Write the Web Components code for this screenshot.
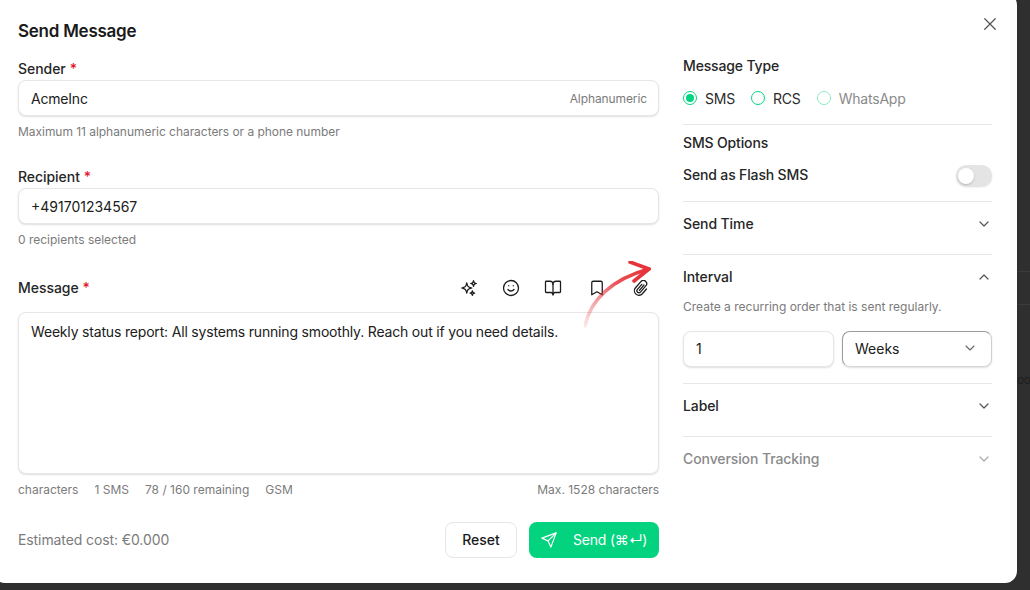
<!DOCTYPE html>
<html>
<head>
<meta charset="utf-8">
<title>Send Message</title>
<style>
  html, body { margin: 0; height: 590px; overflow: hidden; background: #2f2f2f; }
  body { font-family: Inter, "Noto Sans", sans-serif; }
</style>
</head>
<body>
<send-page></send-page>

<script>
const ICONS = {
  sparkles: '<path d="M9.8 15.9 9 18.75l-.8-2.85a4.5 4.5 0 0 0-3.1-3.1L2.25 12l2.85-.8a4.5 4.5 0 0 0 3.1-3.1L9 5.25l.8 2.85a4.5 4.5 0 0 0 3.1 3.1l2.85.8-2.85.8a4.5 4.5 0 0 0-3.1 3.1Z"/><path d="M18.26 8.7 18 9.75l-.26-1.05a3.4 3.4 0 0 0-2.45-2.45L14.25 6l1.04-.26a3.4 3.4 0 0 0 2.45-2.45L18 2.25l.26 1.04a3.4 3.4 0 0 0 2.45 2.45L21.75 6l-1.04.25a3.4 3.4 0 0 0-2.45 2.45Z"/><path d="M16.9 20.57l-.4 1.18-.4-1.18a2.25 2.25 0 0 0-1.42-1.42l-1.18-.4 1.18-.4a2.25 2.25 0 0 0 1.42-1.42l.4-1.18.4 1.18a2.25 2.25 0 0 0 1.42 1.42l1.18.4-1.18.4a2.25 2.25 0 0 0-1.42 1.42Z"/>',
  smile: '<circle cx="12" cy="12" r="10"/><path d="M8 14s1.5 2 4 2 4-2 4-2"/><path d="M9 9h.01M15 9h.01"/>',
  book: '<path d="M12 7v14"/><path d="M3 18a1 1 0 0 1-1-1V4a1 1 0 0 1 1-1h5a4 4 0 0 1 4 4 4 4 0 0 1 4-4h5a1 1 0 0 1 1 1v13a1 1 0 0 1-1 1h-6a3 3 0 0 0-3 3 3 3 0 0 0-3-3z"/>',
  bookmark: '<path d="m19 21-7-4-7 4V5a2 2 0 0 1 2-2h10a2 2 0 0 1 2 2z"/>',
  clip: '<path d="M13.23 6.5l-6.6 7.6a3 3 0 0 0 4.5 4l8.1-9.2a4.9 4.9 0 0 0-7.4-6.5l-8 9.2a6.8 6.8 0 0 0 10.2 9l6.2-7.1"/><path d="M16.5 7.5l-6.9 8"/>',
  send: '<path d="M21.5 2.5 14.5 21.5 10.8 13.2 2.5 9.5z"/><path d="M21.5 2.5 10.8 13.2"/>',
  close: '<path d="M5 5l14 14M19 5 5 19"/>',
  down: '<path d="m6 9 6 6 6-6"/>',
  up: '<path d="m6 15 6-6 6 6"/>'
};

function icon(name, size, width) {
  return `<svg width="${size}" height="${size}" viewBox="0 0 24 24" fill="none" stroke="currentColor" stroke-width="${width || 2}" stroke-linecap="round" stroke-linejoin="round">${ICONS[name]}</svg>`;
}

class FieldLabel extends HTMLElement {
  constructor() {
    super();
    this.attachShadow({ mode: "open" });
    this.shadowRoot.innerHTML = `
      <style>
        :host { display:block; height:20px; line-height:20px; font-size:14px; font-weight:450; letter-spacing:-.05px; color:#262626; }
        b { color:#e5142d; font-weight:500; margin-left:4px; }
      </style>
      <slot></slot><b>*</b>`;
  }
}

class TextBox extends HTMLElement {
  constructor() {
    super();
    this.attachShadow({ mode: "open" });
    this.shadowRoot.innerHTML = `
      <style>
        :host { display:flex; align-items:center; justify-content:space-between; box-sizing:border-box;
                height:36px; padding:0 11px 0 12px; background:#fff; border:1px solid #e6e6e6; border-radius:8px;
                box-shadow:0 1px 2px rgba(0,0,0,.13); font-size:14px; color:#202020; }
        ::slotted([slot=hint]) { font-size:12px; color:#7b7b7b; letter-spacing:-.1px; }
      </style>
      <span><slot></slot></span><slot name="hint"></slot>`;
  }
}

class RadioOption extends HTMLElement {
  constructor() {
    super();
    this.attachShadow({ mode: "open" });
    this.shadowRoot.innerHTML = `
      <style>
        :host { display:flex; align-items:center; gap:8px; height:20px; font-size:14px; letter-spacing:-.2px; color:#2a2a2a; }
        :host([disabled]) { color:#8a8a8a; }
        i { box-sizing:border-box; width:14px; height:14px; border-radius:50%; border:1.5px solid #05d384;
            display:flex; align-items:center; justify-content:center; }
        :host([disabled]) i { border-color:#8ceac3; border-width:1px; }
        :host([checked]) i::after { content:""; width:8px; height:8px; border-radius:50%; background:#05d384; }
      </style>
      <i></i><span><slot></slot></span>`;
  }
}

class ToggleSwitch extends HTMLElement {
  constructor() {
    super();
    this.attachShadow({ mode: "open" });
    this.shadowRoot.innerHTML = `
      <style>
        :host { display:flex; align-items:center; box-sizing:border-box; width:36px; height:21px; padding:0 2px;
                border-radius:11px; background:#e4e4e4; box-shadow:0 1px 2px rgba(0,0,0,.15); }
        i { width:16px; height:16px; border-radius:50%; background:#fff; box-shadow:0 1px 2px rgba(0,0,0,.2); }
      </style>
      <i></i>`;
  }
}

class AccordionRow extends HTMLElement {
  constructor() {
    super();
    this.attachShadow({ mode: "open" });
    const open = this.hasAttribute("open");
    this.shadowRoot.innerHTML = `
      <style>
        :host { display:block; padding-bottom:8px; border-bottom:1px solid #e6e6e6; color:#262626; }
        :host([disabled]) { color:#8a8a8a; border-bottom:none; }
        header { display:flex; align-items:center; justify-content:space-between; height:44px; font-size:14px; font-weight:450; letter-spacing:-.1px; }
        header span { padding-bottom:2px; }
        header svg { display:block; color:#555; }
        :host([disabled]) header svg { color:#aaa; }
      </style>
      <header><span>${this.getAttribute("title")}</span>${icon(open ? "up" : "down", 16, 1.8)}</header>
      <slot></slot>`;
  }
}

class ToolIcon extends HTMLElement {
  constructor() {
    super();
    this.attachShadow({ mode: "open" });
    const size = this.getAttribute("size") || 18;
    this.shadowRoot.innerHTML = `
      <style>
        :host { display:flex; align-items:center; justify-content:center; width:18px; height:18px; color:#1c1c1c; }
        svg { display:block; }
      </style>
      ${icon(this.getAttribute("name"), size, 1.7 * 18 / size)}`;
  }
}

class SendPage extends HTMLElement {
  constructor() {
    super();
    this.attachShadow({ mode: "open" });
    this.shadowRoot.innerHTML = `
      <style>
        :host { display:flex; width:1030px; height:590px; overflow:hidden; }
        .dialog { position:relative; flex:none; box-sizing:border-box; width:1024px; height:590px; margin:-7px 0 0 -7px;
                  padding:7px 0 0 25px; background:#fff; border-radius:12px; display:flex; gap:24px; }
        .left { width:641px; flex:none; }
        .right { width:309px; flex:none; padding-top:56px; }
        h1 { margin:18px 0 15px; font-size:17px; line-height:26px; font-weight:600; color:#1a1a1a; letter-spacing:-.25px; }
        text-box { margin-top:1px; }
        .tight { letter-spacing:-.2px; }
        .help { margin-top:8px; font-size:12px; line-height:16px; color:#7b7b7b; }
        .help.long { letter-spacing:-.04px; }
        .gap { margin-top:27px; }
        .msg-head { display:flex; align-items:center; justify-content:space-between; margin-top:30px; }
        .tools { display:flex; gap:24px; padding-right:9px; }
        .tools .w { margin-left:2px; }
        .area { box-sizing:border-box; height:162px; margin-top:14px; padding:9px 12px; border:1px solid #e6e6e6; border-radius:8px;
                background:#fff; box-shadow:0 1px 2px rgba(0,0,0,.13); font-size:14px; line-height:20px; letter-spacing:-.18px; color:#202020; }
        .counts { display:flex; gap:16px; margin-top:8px; font-size:12px; line-height:16px; color:#7b7b7b; }
        .counts .max { margin-left:auto; }
        .bottom { display:flex; align-items:center; gap:12px; margin-top:24px; }
        .cost { margin-right:auto; padding-bottom:1px; font-size:14px; letter-spacing:-.1px; color:#7b7b7b; }
        .btn { box-sizing:border-box; height:36px; border-radius:8px; font-size:14px; font-weight:450; display:flex; align-items:center; padding-bottom:1px; }
        .reset { width:72px; justify-content:center; border:1px solid #e6e6e6; color:#1a1a1a; background:#fff; }
        .send { width:130px; padding-left:11px; background:#03d37f; color:#fff; gap:15px; }
        .send span { font-weight:400; letter-spacing:-.2px; }
        .send svg { flex:none; }
        .title { height:20px; line-height:20px; font-size:14px; font-weight:450; letter-spacing:-.15px; color:#262626; }
        .radios { display:flex; gap:16px; margin-top:12px; padding-bottom:16px; border-bottom:1px solid #e6e6e6; }
        .sms-title { margin-top:8px; }
        .flash { display:flex; align-items:center; justify-content:space-between; height:21px; margin-top:12px; padding-bottom:15px; border-bottom:1px solid #e6e6e6; font-size:14px; font-weight:450; letter-spacing:-.15px; color:#262626; }
        .flash span { padding-bottom:2px; }
        .sub { font-size:12px; line-height:16px; color:#7b7b7b; }
        .pair { display:flex; gap:8px; margin-top:16px; padding-bottom:8px; }
        .pair text-box { margin:0; flex:none; padding-bottom:2px; }
        .num { width:151px; }
        .sel { width:150px; border-color:#9c9c9c #cfcfcf #d8d8d8 #9c9c9c; }
        .pair .sel { padding-right:13px; }
        .sel svg { display:block; color:#666; }
        .close { position:absolute; right:18px; top:22px; width:18px; height:18px; color:#555; }
        .close svg { display:block; }
        .arrow { position:absolute; left:591px; top:268px; pointer-events:none; }
        .strip { flex:1; padding-top:271px; font-size:12px; letter-spacing:-.5px; color:#1e1e1e; overflow:hidden; }
        .strip hr { height:1px; margin:0 0 32px; border:0; background:#3b3b3b; }
        .strip div { margin-top:65px; line-height:20px; white-space:nowrap; }
      </style>
      <div class="dialog">
        <div class="left">
          <h1>Send Message</h1>
          <field-label>Sender</field-label>
          <text-box><span class="tight">AcmeInc</span><span slot="hint">Alphanumeric</span></text-box>
          <div class="help long">Maximum 11 alphanumeric characters or a phone number</div>
          <field-label class="gap">Recipient</field-label>
          <text-box>+491701234567</text-box>
          <div class="help">0 recipients selected</div>
          <div class="msg-head">
            <field-label>Message</field-label>
            <div class="tools">
              <tool-icon name="sparkles"></tool-icon>
              <tool-icon name="smile"></tool-icon>
              <tool-icon name="book"></tool-icon>
              <tool-icon class="w" name="bookmark"></tool-icon>
              <tool-icon class="w" name="clip" size="16"></tool-icon>
            </div>
          </div>
          <div class="area">Weekly status report: All systems running smoothly. Reach out if you need details.</div>
          <div class="counts">
            <span>characters</span><span>1 SMS</span><span>78 / 160 remaining</span><span>GSM</span>
            <span class="max">Max. 1528 characters</span>
          </div>
          <div class="bottom">
            <span class="cost">Estimated cost: €0.000</span>
            <div class="btn reset">Reset</div>
            <div class="btn send">${icon("send", 18, 1.6)}<span>Send (⌘↵)</span></div>
          </div>
        </div>
        <div class="right">
          <div class="title">Message Type</div>
          <div class="radios">
            <radio-option checked>SMS</radio-option>
            <radio-option>RCS</radio-option>
            <radio-option disabled>WhatsApp</radio-option>
          </div>
          <div class="title sms-title">SMS Options</div>
          <div class="flash"><span>Send as Flash SMS</span><toggle-switch></toggle-switch></div>
          <accordion-row title="Send Time"></accordion-row>
          <accordion-row title="Interval" open>
            <div class="sub">Create a recurring order that is sent regularly.</div>
            <div class="pair">
              <text-box class="num">1</text-box>
              <text-box class="sel">Weeks<span slot="hint">${icon("down", 16, 1.6)}</span></text-box>
            </div>
          </accordion-row>
          <accordion-row title="Label"></accordion-row>
          <accordion-row title="Conversion Tracking" disabled></accordion-row>
        </div>
        <div class="close">${icon("close", 18, 1.7)}</div>
        <svg class="arrow" width="70" height="70" viewBox="0 0 70 70" fill="none" stroke-linecap="round" stroke-linejoin="round">
          <defs>
            <linearGradient id="fade" gradientUnits="userSpaceOnUse" x1="1" y1="65" x2="60" y2="8">
              <stop offset="0" stop-color="#e5343a" stop-opacity=".12"/>
              <stop offset=".65" stop-color="#e5343a" stop-opacity=".85"/>
              <stop offset="1" stop-color="#e5343a"/>
            </linearGradient>
          </defs>
          <path d="M1 65C6 39 28 18 65 8" stroke="url(#fade)" stroke-width="3.6"/>
          <path d="M46 1 65 8 50 20" stroke="#e5343a" stroke-width="3.6"/>
        </svg>
      </div>
      <div class="strip"><hr><hr><div>oo</div></div>`;
  }
}

customElements.define("field-label", FieldLabel);
customElements.define("text-box", TextBox);
customElements.define("radio-option", RadioOption);
customElements.define("toggle-switch", ToggleSwitch);
customElements.define("accordion-row", AccordionRow);
customElements.define("tool-icon", ToolIcon);
customElements.define("send-page", SendPage);
</script>
</body>
</html>
